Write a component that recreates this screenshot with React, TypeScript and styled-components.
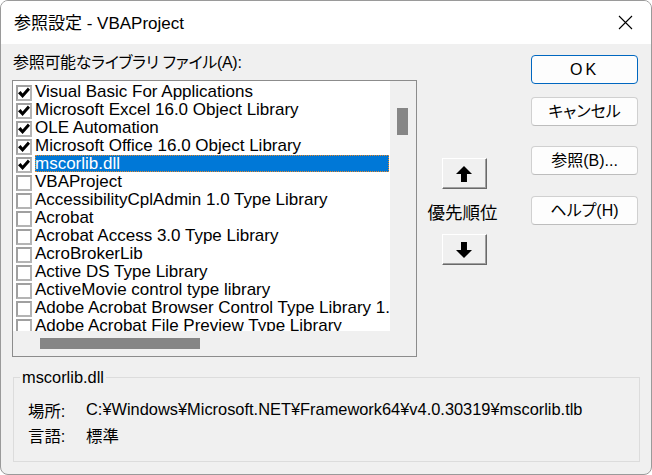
import React from "react";
import styled, { createGlobalStyle } from "styled-components";

const Global = createGlobalStyle`
  html, body { margin: 0; padding: 0; background: #ffffff; }
  * { box-sizing: border-box; }
`;

const FONT = `"Liberation Sans", "Noto Sans CJK JP", sans-serif`;

const Window = styled.div`
  width: 652px;
  height: 475px;
  border: 1px solid #9a9a9a;
  border-radius: 8px;
  overflow: hidden;
  background: #f0f0f0;
  font-family: ${FONT};
  font-feature-settings: "palt";
  color: #000;
  display: flex;
  flex-direction: column;
`;

const TitleBar = styled.div`
  height: 43px;
  flex: none;
  background: #ffffff;
  display: flex;
  align-items: center;
  justify-content: space-between;
  padding: 0 18px 0 13px;
`;

const Title = styled.div`
  font-size: 17px;
  line-height: 20px;
  padding-top: 2px;
`;

const CloseIcon = styled.svg`
  width: 15px;
  height: 15px;
  display: block;
`;

const Body = styled.div`
  flex: 1;
  display: flex;
  flex-direction: column;
  padding: 0 12px 0 11px;
`;

const MainRow = styled.div`
  display: flex;
  align-items: flex-start;
`;

const LeftCol = styled.div`
  width: 405px;
  padding-top: 10px;
  display: flex;
  flex-direction: column;
`;

const Label = styled.div`
  font-size: 16px;
  letter-spacing: -0.3px;
  line-height: 18px;
  height: 18px;
  padding-left: 1px;
  white-space: nowrap;
  margin-bottom: 8px;
`;

const ListFrame = styled.div`
  width: 405px;
  height: 277px;
  border: 1px solid #8c8c8c;
  background: #ffffff;
  display: grid;
  grid-template-columns: 1fr 26px;
  grid-template-rows: 1fr 25px;
`;

const Viewport = styled.div`
  overflow: hidden;
  padding-top: 2px;
  background: #ffffff;
`;

const Row = styled.div`
  height: 18px;
  display: flex;
  align-items: stretch;
  padding-left: 3px;
  padding-right: 1px;
`;

const Box = styled.div`
  width: 16px;
  height: 16px;
  flex: none;
  align-self: flex-end;
  border: 2px solid #b4b4b4;
  border-top-color: #a0a0a0;
  border-left-color: #a0a0a0;
  background: #ffffff;
  display: flex;
  align-items: center;
  justify-content: center;
`;

const ItemText = styled.div<{ $sel?: boolean }>`
  flex: 1;
  margin-left: 3px;
  font-size: 17px;
  line-height: 18px;
  white-space: nowrap;
  overflow: visible;
  padding-left: 0px;
  color: ${(p) => (p.$sel ? "#ffffff" : "#000000")};
  background: ${(p) => (p.$sel ? "#0078d7" : "transparent")};
  outline: ${(p) => (p.$sel ? "1px dotted #e8892a" : "none")};
  outline-offset: -1px;
  height: 17px;
`;

const VTrack = styled.div`
  background: #f0f0f0;
  padding: 27px 8px 0 7px;
`;

const VThumb = styled.div`
  width: 11px;
  height: 27px;
  background: #868686;
`;

const HTrack = styled.div`
  background: #f0f0f0;
  padding: 7px 0 0 27px;
`;

const HThumb = styled.div`
  width: 160px;
  height: 11px;
  background: #868686;
`;

const Corner = styled.div`
  background: #f0f0f0;
`;

const MidCol = styled.div`
  width: 94px;
  padding-top: 114px;
  display: flex;
  flex-direction: column;
  align-items: center;
`;

const ArrowButton = styled.div`
  width: 45px;
  height: 31px;
  background: #f0f0f0;
  border-top: 1px solid #ffffff;
  border-left: 1px solid #ffffff;
  border-right: 1px solid #696969;
  border-bottom: 1px solid #696969;
  box-shadow: inset -1px -1px 0 #a0a0a0;
  display: flex;
  align-items: center;
  justify-content: center;
`;

const Priority = styled.div`
  font-size: 17.5px;
  line-height: 22px;
  margin: 13px 0 10px;
  white-space: nowrap;
  margin-left: -3px;
`;

const RightCol = styled.div`
  margin-left: 20px;
  padding-top: 11px;
  display: flex;
  flex-direction: column;
`;

const Button = styled.div<{ $primary?: boolean; $gap: number }>`
  width: 107px;
  height: 29px;
  margin-top: ${(p) => p.$gap}px;
  background: #fdfdfd;
  border: 1px solid ${(p) => (p.$primary ? "#0067c0" : "#d0d0d0")};
  border-bottom-color: ${(p) => (p.$primary ? "#0067c0" : "#bdbdbd")};
  border-radius: 4px;
  display: flex;
  align-items: center;
  justify-content: center;
  font-size: 16px;
  line-height: 18px;
  letter-spacing: ${(p) => (p.$primary ? "3px" : "0")};
`;

const Group = styled.fieldset`
  margin: 11px 0 0 1px;
  padding: 0;
  width: 627px;
  border: 1px solid #dcdcdc;
  min-width: 0;
`;

const Legend = styled.legend`
  margin-left: 6px;
  padding: 0 2px;
  font-size: 16.4px;
  line-height: 18px;
`;

const GroupBody = styled.div`
  padding: 11px 0 14px 14px;
  display: flex;
  flex-direction: column;
`;

const InfoRow = styled.div`
  display: flex;
  height: 25px;
  align-items: center;
  font-size: 16.4px;
  white-space: nowrap;
`;

const InfoKey = styled.div`
  width: 58px;
`;

const Check = () => (
  <svg width="12" height="12" viewBox="0 0 12 12">
    <polygon points="0,6.2 2.6,4 4.6,6.6 9.9,0.6 12,2.7 4.6,11" fill="#000" />
  </svg>
);

const UpArrow = () => (
  <svg width="16" height="16" viewBox="0 0 14 14">
    <polygon points="7,0 14,7 9.6,7 9.6,14 4.4,14 4.4,7 0,7" fill="#000" />
  </svg>
);

const DownArrow = () => (
  <svg width="16" height="16" viewBox="0 0 14 14">
    <polygon points="4.4,0 9.6,0 9.6,7 14,7 7,14 0,7 4.4,7" fill="#000" />
  </svg>
);

const items: { name: string; checked: boolean; sel?: boolean }[] = [
  { name: "Visual Basic For Applications", checked: true },
  { name: "Microsoft Excel 16.0 Object Library", checked: true },
  { name: "OLE Automation", checked: true },
  { name: "Microsoft Office 16.0 Object Library", checked: true },
  { name: "mscorlib.dll", checked: true, sel: true },
  { name: "VBAProject", checked: false },
  { name: "AccessibilityCplAdmin 1.0 Type Library", checked: false },
  { name: "Acrobat", checked: false },
  { name: "Acrobat Access 3.0 Type Library", checked: false },
  { name: "AcroBrokerLib", checked: false },
  { name: "Active DS Type Library", checked: false },
  { name: "ActiveMovie control type library", checked: false },
  { name: "Adobe Acrobat Browser Control Type Library 1.0", checked: false },
  { name: "Adobe Acrobat File Preview Type Library", checked: false },
];

export default function App() {
  return (
    <>
      <Global />
      <Window>
        <TitleBar>
          <Title>参照設定 - VBAProject</Title>
          <CloseIcon viewBox="0 0 15 15">
            <path d="M1 1 L14 14 M14 1 L1 14" stroke="#000" strokeWidth="1.1" fill="none" />
          </CloseIcon>
        </TitleBar>
        <Body>
          <MainRow>
            <LeftCol>
              <Label>参照可能なライブラリ ファイル(A):</Label>
              <ListFrame>
                <Viewport>
                  {items.map((it) => (
                    <Row key={it.name}>
                      <Box>{it.checked && <Check />}</Box>
                      <ItemText $sel={it.sel}>{it.name}</ItemText>
                    </Row>
                  ))}
                </Viewport>
                <VTrack>
                  <VThumb />
                </VTrack>
                <HTrack>
                  <HThumb />
                </HTrack>
                <Corner />
              </ListFrame>
            </LeftCol>
            <MidCol>
              <ArrowButton>
                <UpArrow />
              </ArrowButton>
              <Priority>優先順位</Priority>
              <ArrowButton>
                <DownArrow />
              </ArrowButton>
            </MidCol>
            <RightCol>
              <Button $primary $gap={0}>OK</Button>
              <Button $gap={13}>キャンセル</Button>
              <Button $gap={20}>参照(B)...</Button>
              <Button $gap={21}>ヘルプ(H)</Button>
            </RightCol>
          </MainRow>
          <Group>
            <Legend>mscorlib.dll</Legend>
            <GroupBody>
              <InfoRow>
                <InfoKey>場所:</InfoKey>
                <span>C:¥Windows¥Microsoft.NET¥Framework64¥v4.0.30319¥mscorlib.tlb</span>
              </InfoRow>
              <InfoRow>
                <InfoKey>言語:</InfoKey>
                <span>標準</span>
              </InfoRow>
            </GroupBody>
          </Group>
        </Body>
      </Window>
    </>
  );
}
